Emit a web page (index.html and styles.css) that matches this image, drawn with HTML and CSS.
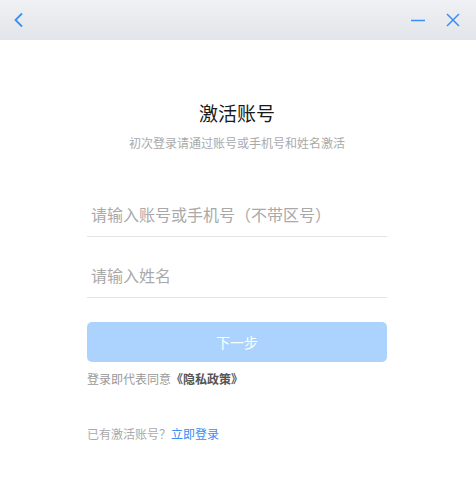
FILE: index.html
```html
<!DOCTYPE html>
<html lang="zh-CN">
  <head>
    <meta charset="UTF-8" />
    <title>激活账号</title>
    <link rel="stylesheet" href="styles.css">
  </head>
  <body>
    <div class="titlebar">
      <button class="tb-btn back" aria-label="返回">
        <svg width="12" height="16" viewBox="0 0 12 16"><path d="M9 1.5 L2.5 8 L9 14.5" fill="none" stroke="#3a8ef6" stroke-width="1.8"/></svg>
      </button>
      <div class="tb-right">
        <button class="tb-btn" aria-label="最小化">
          <svg width="16" height="16" viewBox="0 0 16 16"><path d="M1 8.5 H15" stroke="#3a8ef6" stroke-width="1.5"/></svg>
        </button>
        <button class="tb-btn" aria-label="关闭">
          <svg width="16" height="16" viewBox="0 0 16 16"><path d="M2 2 L14 14 M14 2 L2 14" stroke="#3a8ef6" stroke-width="1.5"/></svg>
        </button>
      </div>
    </div>

    <div class="panel">
      <h1>激活账号</h1>
      <p class="subtitle">初次登录请通过账号或手机号和姓名激活</p>
      <form class="form">
        <input type="text" class="field" placeholder="请输入账号或手机号（不带区号）" />
        <input type="text" class="field" placeholder="请输入姓名" />
        <button type="button" class="next" disabled>下一步</button>
        <p class="agree">登录即代表同意<b>《隐私政策》</b></p>
      </form>
      <p class="login">已有激活账号？<a href="#">立即登录</a></p>
    </div>
  </body>
</html>
```

FILE: styles.css
```css
body {
  margin: 0;
  font-family: "Noto Sans CJK SC", "Noto Sans", sans-serif;
  background: #fff;
  color: #222;
}
.titlebar {
  height: 40px;
  background: linear-gradient(#eff1f4, #e2e5e9);
  display: flex;
  align-items: center;
  justify-content: space-between;
  padding: 0 15px 0 11px;
}
.tb-btn {
  background: none;
  border: none;
  padding: 0;
  display: flex;
  align-items: center;
  cursor: pointer;
}
.back {
  width: 16px;
  height: 16px;
  justify-content: center;
}
.tb-right {
  display: flex;
  gap: 19px;
}
.panel {
  width: 300px;
  margin-left: calc(50% - 151px);
  display: flex;
  flex-direction: column;
}
h1 {
  margin: 59px 0 0;
  font-size: 19px;
  font-weight: 400;
  line-height: 28px;
  text-align: center;
  color: #1a1a1a;
}
.subtitle {
  margin: 7px 0 0;
  font-size: 12px;
  line-height: 18px;
  text-align: center;
  color: #aaaaaa;
}
.form {
  display: flex;
  flex-direction: column;
  margin-top: 40px;
}
.field {
  height: 44px;
  border: none;
  border-bottom: 1px solid #e3e3e3;
  padding: 0 4px;
  font-family: inherit;
  font-size: 16px;
  outline: none;
  margin-bottom: 16px;
}
.field::placeholder {
  color: #a9a9a9;
}
.next {
  margin-top: 8px;
  height: 40px;
  border: none;
  border-radius: 5px;
  background: #acd3fd;
  color: #fff;
  font-family: inherit;
  font-size: 14px;
}
.agree {
  margin: 8px 0 0;
  font-size: 12px;
  line-height: 18px;
  color: #999;
}
.agree b {
  color: #555;
}
.login {
  margin: 37px 0 0;
  font-size: 12px;
  line-height: 18px;
  color: #aaa;
}
.login a {
  color: #3a8ef6;
  text-decoration: none;
}
```
